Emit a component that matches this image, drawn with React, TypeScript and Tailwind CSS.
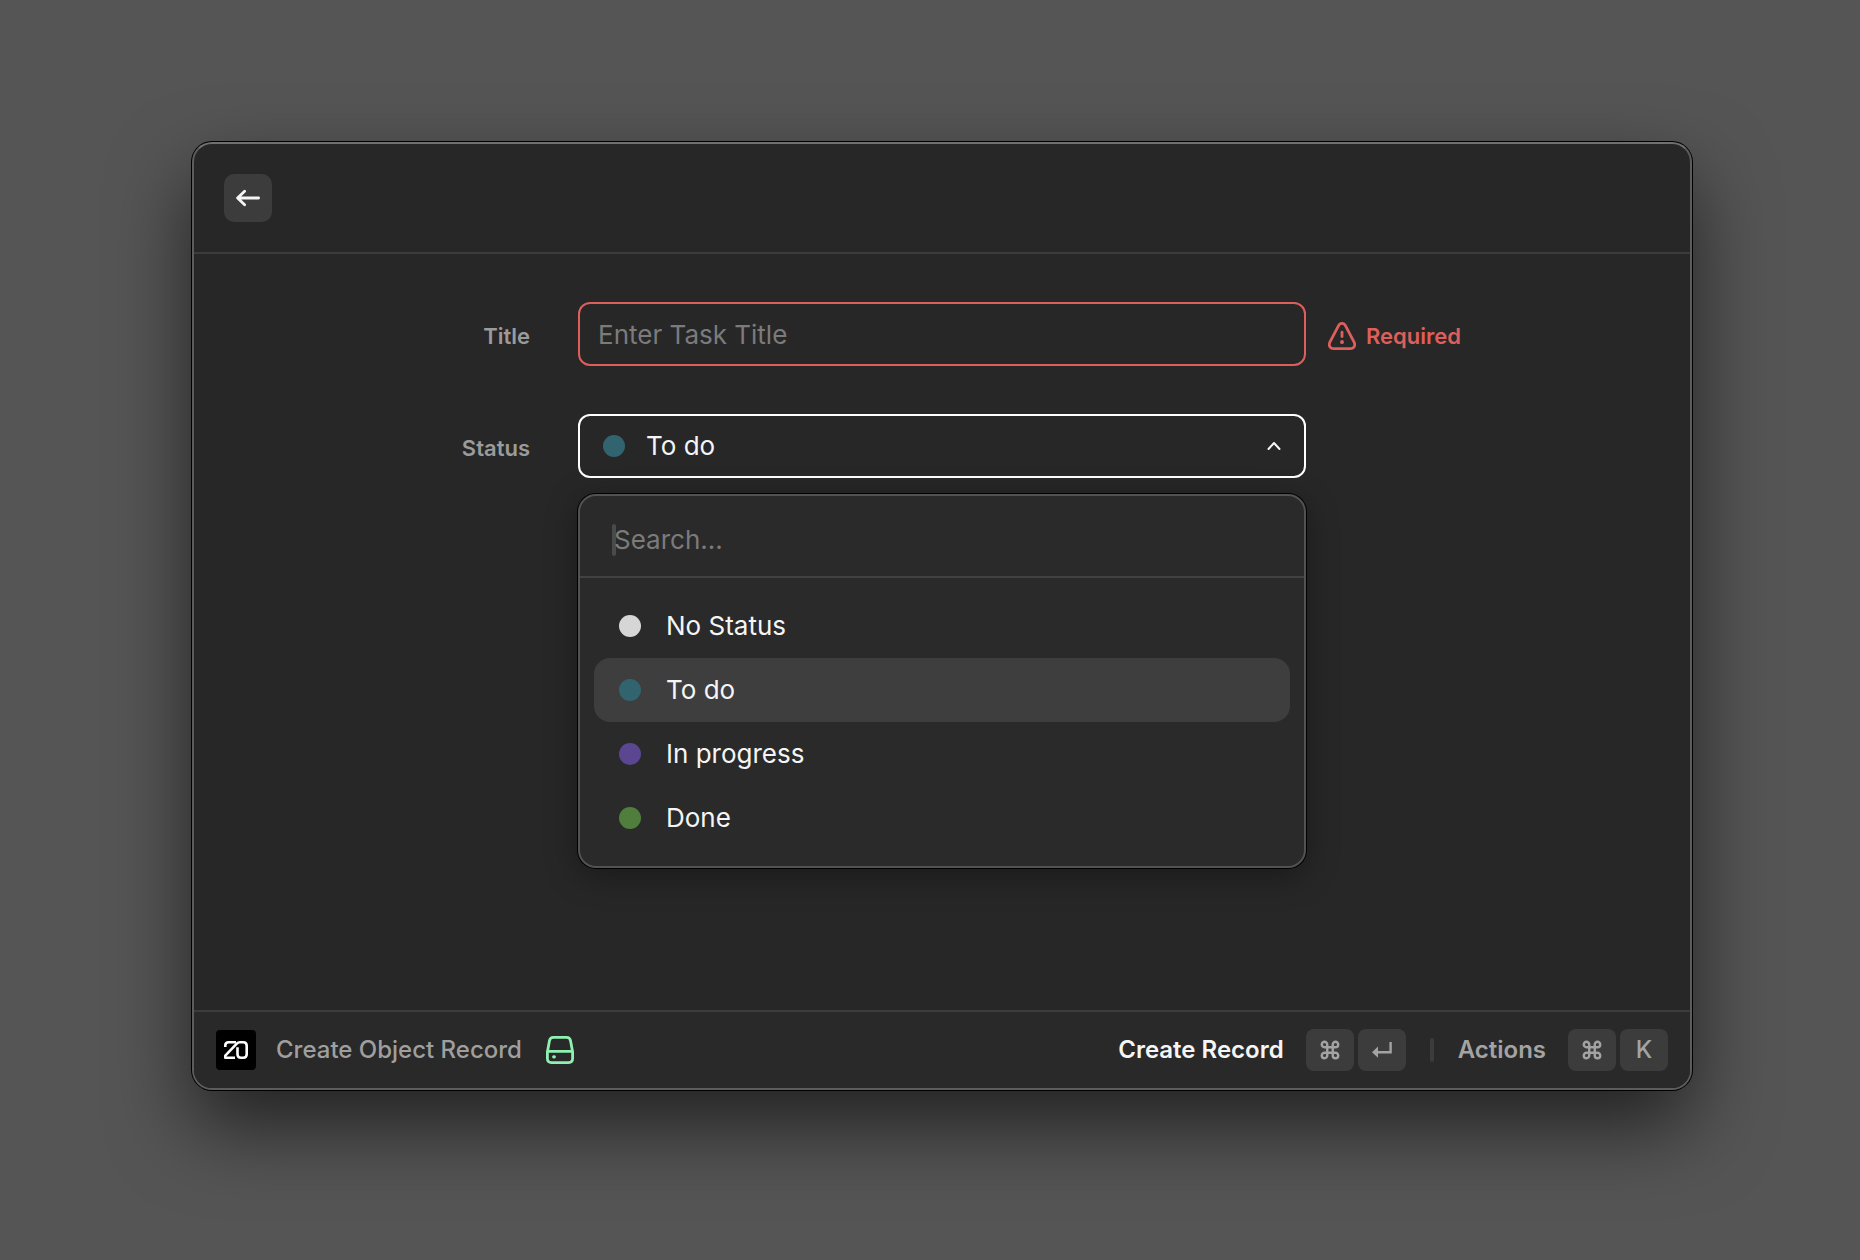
import React, { useState } from "react";
import { Command } from "lucide-react";

const statuses = [
  { id: "none", label: "No Status", dot: "bg-[#d6d6d6]" },
  { id: "todo", label: "To do", dot: "bg-[#31646f]" },
  { id: "progress", label: "In progress", dot: "bg-[#5b4691]" },
  { id: "done", label: "Done", dot: "bg-[#507f3d]" },
];

function Dot({ color }: { color: string }) {
  return <span className={`size-[22px] shrink-0 rounded-full ${color}`} />;
}

function Keycap({ children, label }: { children: React.ReactNode; label: string }) {
  return (
    <kbd
      aria-label={label}
      className="flex h-[42px] w-12 items-center justify-center rounded-lg bg-[#3c3c3c] font-sans text-2xl font-medium text-[#a3a3a3]"
    >
      <span className="font-['Inter',sans-serif]">{children}</span>
    </kbd>
  );
}

function WarningIcon() {
  return (
    <svg viewBox="0 0 28 28" className="size-7" fill="none" stroke="currentColor" strokeWidth="2.8" strokeLinecap="round" strokeLinejoin="round" aria-hidden="true">
      <path d="M10.7 3.4 L1.9 20.2 C0.4 23.4 1.9 26.6 5.6 26.6 H22.4 C26.1 26.6 27.6 23.4 26.1 20.2 L17.3 3.4 C15.8 0.7 12.2 0.7 10.7 3.4 Z" />
      <path d="M14 10.2 V14.6" />
      <path d="M14 20 V20.2" strokeWidth="3.8" />
    </svg>
  );
}

function DriveIcon() {
  return (
    <svg viewBox="0 0 28 28" className="size-7" fill="none" stroke="currentColor" strokeWidth="2.8" strokeLinecap="round" strokeLinejoin="round" aria-hidden="true">
      <path d="M1.4 16 L3.4 5 Q4 1.4 7.4 1.4 H20.6 Q24 1.4 24.6 5 L26.6 16 V22.6 Q26.6 26.6 22.6 26.6 H5.4 Q1.4 26.6 1.4 22.6 Z" />
      <path d="M2 15.4 H26" />
      <path d="M7.7 20.8 H8.3" strokeWidth="3.2" />
    </svg>
  );
}

function TwentyLogo() {
  return (
    <svg viewBox="0 0 40 40" className="size-10" aria-hidden="true">
      <rect width="40" height="40" rx="4" fill="#000" />
      <g fill="none" stroke="#fff" strokeWidth="2.6" strokeLinejoin="round">
        <path d="M9.3 17 V15.6 Q9.3 12.3 12.6 12.3 H20" />
        <path d="M19 27.7 H9.3 V25.6 L20.8 13.6 Q22 12.3 23.8 12.3 H27.2 Q30.7 12.3 30.7 15.8 V24.2 Q30.7 27.7 27.2 27.7 H25 Q21.5 27.7 21.5 24.2 V17.2" />
      </g>
    </svg>
  );
}

function ReturnIcon() {
  return (
    <svg viewBox="0 0 20 18" className="h-[18px] w-5" fill="none" stroke="currentColor" strokeWidth="2.4" aria-hidden="true">
      <path d="M18.6 1 V11.2 H5" />
      <path d="M0 11.2 L6 5.6 V16.8 Z" fill="currentColor" stroke="none" />
    </svg>
  );
}

export default function App() {
  const [title, setTitle] = useState("");
  const [query, setQuery] = useState("");
  const [selected, setSelected] = useState("todo");
  const current = statuses.find((s) => s.id === selected) ?? statuses[0];

  return (
    <div className="flex min-h-screen bg-[#555555] pt-[142px] pr-42 pb-[170px] pl-48 font-['Inter',sans-serif] text-[26px] leading-8 text-[#f5f5f5]">
      <main className="flex flex-1 flex-col rounded-[20px] border-2 border-[#5c5c5c] border-t-[#707070] bg-[#272727] shadow-[0_0_0_1px_#000,0_36px_80px_0_rgba(0,0,0,0.6)]">
        <header className="border-b-2 border-[#3c3c3c] p-[30px]">
          <button type="button" aria-label="Back" className="flex size-12 items-center justify-center rounded-[10px] bg-[#3c3c3c]">
            <svg viewBox="0 0 24 18" className="h-[18px] w-6" fill="none" stroke="currentColor" strokeWidth="2.8" strokeLinecap="round" strokeLinejoin="round" aria-hidden="true">
              <path d="M22.6 9 H1.6 M8.6 2.2 L1.6 9 L8.6 15.8" />
            </svg>
          </button>
        </header>

        <form id="record" className="grid flex-1 grid-cols-[1fr_728px_1fr] content-start gap-y-12 py-12" onSubmit={(e) => e.preventDefault()}>
          <label htmlFor="title" className="self-center pt-1 pr-12 text-right text-[22px] font-semibold text-[#9b9b9b]">
            Title
          </label>
          <input
            id="title"
            value={title}
            onChange={(e) => setTitle(e.target.value)}
            placeholder="Enter Task Title"
            aria-invalid="true"
            aria-describedby="title-error"
            className="h-16 rounded-xl border-2 border-[#dd5f5c] bg-transparent px-[18px] outline-none placeholder:text-[#7b7b7b]"
          />
          <p id="title-error" className="flex items-center gap-2.5 pt-1 pl-[22px] text-[22px] font-semibold text-[#dd5f5c]">
            <WarningIcon />
            Required
          </p>

          <label htmlFor="status" className="flex h-16 items-center justify-end pt-1 pr-12 text-[22px] font-semibold text-[#9b9b9b]">
            Status
          </label>
          <div className="relative">
            <button
              id="status"
              type="button"
              aria-haspopup="listbox"
              aria-expanded="true"
              className="flex h-16 w-full items-center gap-[21px] rounded-xl border-2 border-white px-[23px] text-left"
            >
              <Dot color={current.dot} />
              <span className="flex-1">{current.label}</span>
              <svg viewBox="0 0 14 10" className="h-2.5 w-3.5" fill="none" stroke="currentColor" strokeWidth="2" strokeLinecap="round" strokeLinejoin="round" aria-hidden="true">
                <path d="M1.5 8 L7 2 L12.5 8" />
              </svg>
            </button>

            <div className="absolute inset-x-0 top-full mt-4 rounded-[18px] border-2 border-[#525252] bg-[#2a2a2a] shadow-[0_0_0_1px_#000,0_8px_32px_rgba(0,0,0,0.35)]">
              <div className="flex h-[82px] items-center border-b-2 border-[#424242] px-8 pt-2">
                <span className="h-8 w-1 rounded-sm bg-[#4a4a4a]" />
                <input
                  aria-label="Search statuses"
                  value={query}
                  onChange={(e) => setQuery(e.target.value)}
                  placeholder="Search..."
                  className="-ml-0.5 min-w-0 flex-1 bg-transparent outline-none placeholder:text-[#7b7b7b]"
                />
              </div>
              <ul role="listbox" aria-label="Status" className="px-3.5 py-4">
                {statuses.map((s) => (
                  <li key={s.id} role="option" aria-selected={s.id === selected}>
                    <button
                      type="button"
                      onClick={() => setSelected(s.id)}
                      className={`flex h-16 w-full items-center gap-[25px] rounded-2xl px-[25px] text-left ${s.id === selected ? "bg-[#3e3e3e]" : ""}`}
                    >
                      <Dot color={s.dot} />
                      {s.label}
                    </button>
                  </li>
                ))}
              </ul>
            </div>
          </div>
        </form>

        <footer className="flex h-[78px] items-center rounded-b-[18px] border-t-2 border-[#3c3c3c] bg-[#292929] px-[22px] text-2xl">
          <TwentyLogo />
          <span className="pl-5 font-medium text-[#9f9f9f]">Create Object Record</span>
          <span className="pl-6 text-[#8ff0b0]">
            <DriveIcon />
          </span>
          <div className="ml-auto flex items-center">
            <button type="submit" form="record" className="flex items-center gap-1">
              <span className="pr-[18px] font-semibold">Create Record</span>
              <Keycap label="Command">
                <Command className="size-[22px]" strokeWidth={2.6} />
              </Keycap>
              <Keycap label="Return">
                <ReturnIcon />
              </Keycap>
            </button>
            <span className="mx-6 h-6 w-1 rounded-full bg-[#3c3c3c]" />
            <button type="button" className="flex items-center gap-1">
              <span className="pr-[18px] font-semibold text-[#a3a3a3]">Actions</span>
              <Keycap label="Command">
                <Command className="size-[22px]" strokeWidth={2.6} />
              </Keycap>
              <Keycap label="K">K</Keycap>
            </button>
          </div>
        </footer>
      </main>
    </div>
  );
}
